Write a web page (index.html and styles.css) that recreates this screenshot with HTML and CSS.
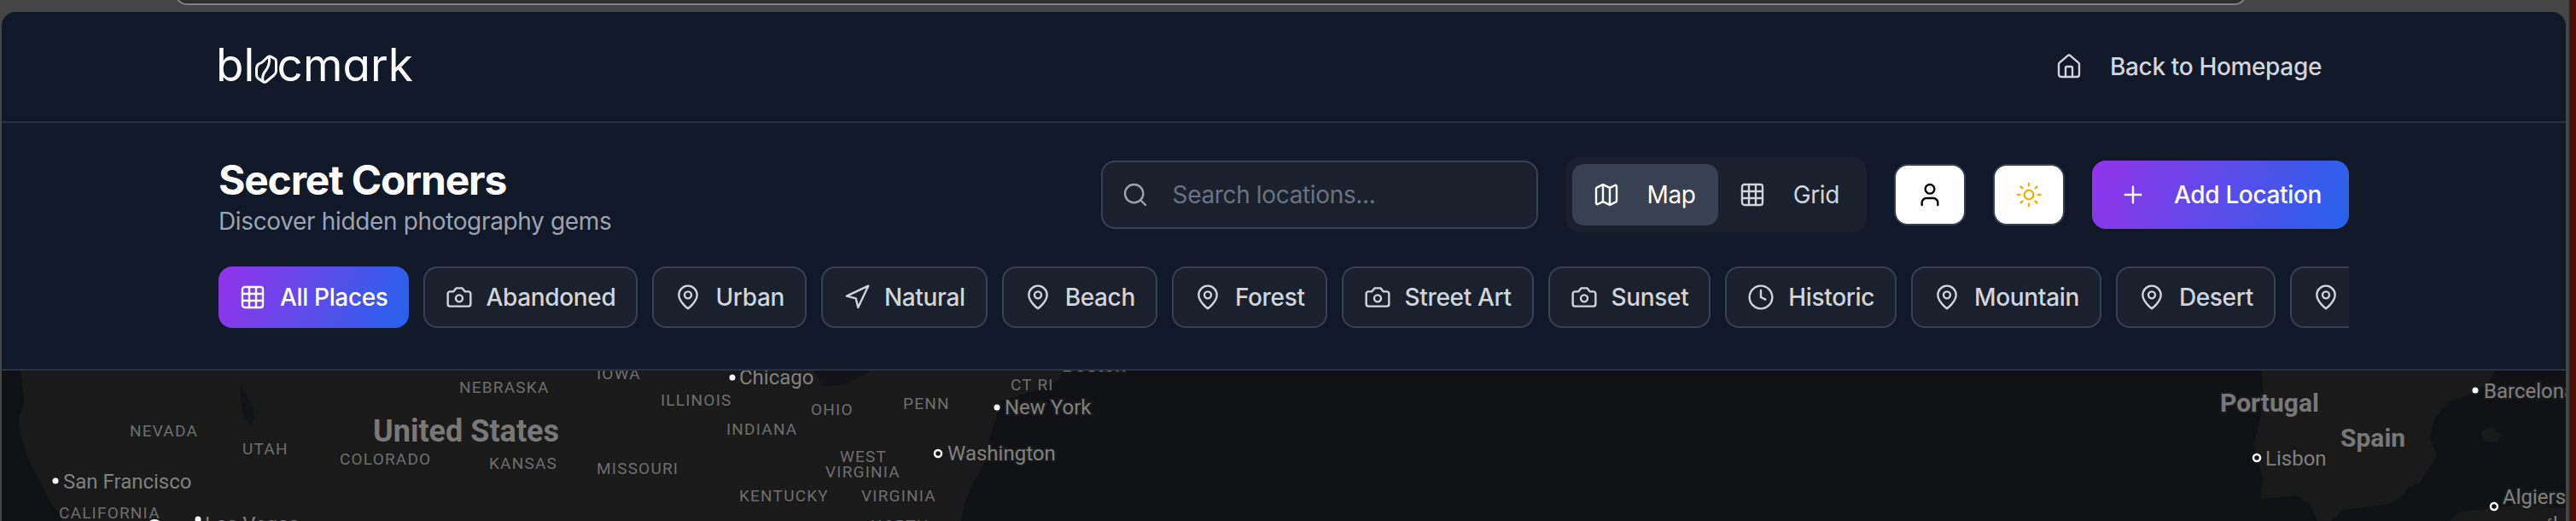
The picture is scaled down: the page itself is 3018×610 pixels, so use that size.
FILE: index.html
```html
<!DOCTYPE html>
<html lang="en">
<head>
    <meta charset="UTF-8">
    <title>Secret Corners</title>
    <link rel="stylesheet" href="styles.css">
</head>
<body>

    <!-- icons used more than once -->
    <svg class="sprite" aria-hidden="true">
        <symbol id="i-pin" viewBox="0 0 24 24"><path d="M20 10c0 6-8 12-8 12s-8-6-8-12a8 8 0 0 1 16 0Z"/><circle cx="12" cy="10" r="3"/></symbol>
        <symbol id="i-camera" viewBox="0 0 24 24"><path d="M14.5 4h-5L7 7H4a2 2 0 0 0-2 2v9a2 2 0 0 0 2 2h16a2 2 0 0 0 2-2V9a2 2 0 0 0-2-2h-3l-2.500-3z"/><circle cx="12" cy="13" r="3"/></symbol>
        <symbol id="i-grid" viewBox="0 0 24 24"><rect x="3" y="3" width="18" height="18" rx="2"/><path d="M3 9h18M3 15h18M9 3v18M15 3v18"/></symbol>
        <symbol id="i-nav" viewBox="0 0 24 24"><polygon points="3 11 22 2 13 21 11 13 3 11"/></symbol>
        <symbol id="i-clock" viewBox="0 0 24 24"><circle cx="12" cy="12" r="10"/><polyline points="12 6 12 12 16 14"/></symbol>
    </svg>

    <div class="browser-bar"></div>

    <div class="window">
        <section class="panel">
            <header class="topbar">
                <a class="logo" href="#">
                    <span>bl</span><svg class="logo-leaf" viewBox="0 0 26 34"><path d="M8 9 15 2.500Q16.500 1.500 18 2.200L22.500 4.500Q24.500 5.500 24.500 8V19Q24.500 22 22 24L13 31.500Q11 33 9 31.500L4.500 28.500Q1.500 26.500 1.500 23.500V17Q1.500 13 4 11Z"/><path d="M16.500 2.500Q17.500 13 11 20.500Q8 24.500 9 31"/></svg><span>cmark</span>
                </a>
                <a class="back-link" href="#">
                    <svg class="icon" viewBox="0 0 24 24"><path d="M15 21v-8a1 1 0 0 0-1-1h-4a1 1 0 0 0-1 1v8"/><path d="M3 10a2 2 0 0 1 .709-1.528l7-5.999a2 2 0 0 1 2.582 0l7 5.999A2 2 0 0 1 21 10v9a2 2 0 0 1-2 2H5a2 2 0 0 1-2-2z"/></svg>
                    Back to Homepage
                </a>
            </header>

            <div class="content">
                <div class="toolbar">
                    <div class="title-block">
                        <h1>Secret Corners</h1>
                        <p>Discover hidden photography gems</p>
                    </div>
                    <div class="actions">
                        <label class="search">
                            <svg class="icon" viewBox="0 0 24 24"><circle cx="11" cy="11" r="8"/><path d="m21 21-4.300-4.300"/></svg>
                            <input type="text" placeholder="Search locations...">
                        </label>
                        <div class="view-toggle">
                            <button class="view-btn active">
                                <svg class="icon" viewBox="0 0 24 24"><path d="M14.106 5.553a2 2 0 0 0 1.788 0l3.659-1.830A1 1 0 0 1 21 4.619v12.764a1 1 0 0 1-.553.894l-4.553 2.277a2 2 0 0 1-1.788 0l-4.212-2.106a2 2 0 0 0-1.788 0l-3.659 1.830A1 1 0 0 1 3 19.381V6.618a1 1 0 0 1 .553-.894l4.553-2.277a2 2 0 0 1 1.788 0z"/><path d="M15 5.764v15"/><path d="M9 3.236v15"/></svg>
                                Map
                            </button>
                            <button class="view-btn">
                                <svg class="icon"><use href="#i-grid"/></svg>
                                Grid
                            </button>
                        </div>
                        <button class="square-btn">
                            <svg class="icon" viewBox="0 0 24 24"><path d="M19 21v-2a4 4 0 0 0-4-4H9a4 4 0 0 0-4 4v2"/><circle cx="12" cy="7" r="4"/></svg>
                        </button>
                        <button class="square-btn sun">
                            <svg class="icon" viewBox="0 0 24 24"><circle cx="12" cy="12" r="4"/><path d="M12 2v2M12 20v2M4.930 4.930l1.410 1.410M17.660 17.660l1.410 1.410M2 12h2M20 12h2M6.340 17.660l-1.410 1.410M19.070 4.930l-1.410 1.410"/></svg>
                        </button>
                        <button class="add-btn">
                            <svg class="icon" viewBox="0 0 24 24"><path d="M5 12h14M12 5v14"/></svg>
                            Add Location
                        </button>
                    </div>
                </div>

                <nav class="filters">
                    <a class="chip active" href="#"><svg class="icon"><use href="#i-grid"/></svg>All Places</a>
                    <a class="chip" href="#"><svg class="icon"><use href="#i-camera"/></svg>Abandoned</a>
                    <a class="chip" href="#"><svg class="icon"><use href="#i-pin"/></svg>Urban</a>
                    <a class="chip" href="#"><svg class="icon"><use href="#i-nav"/></svg>Natural</a>
                    <a class="chip" href="#"><svg class="icon"><use href="#i-pin"/></svg>Beach</a>
                    <a class="chip" href="#"><svg class="icon"><use href="#i-pin"/></svg>Forest</a>
                    <a class="chip" href="#"><svg class="icon"><use href="#i-camera"/></svg>Street Art</a>
                    <a class="chip" href="#"><svg class="icon"><use href="#i-camera"/></svg>Sunset</a>
                    <a class="chip" href="#"><svg class="icon"><use href="#i-clock"/></svg>Historic</a>
                    <a class="chip" href="#"><svg class="icon"><use href="#i-pin"/></svg>Mountain</a>
                    <a class="chip" href="#"><svg class="icon"><use href="#i-pin"/></svg>Desert</a>
                    <a class="chip" href="#"><svg class="icon"><use href="#i-pin"/></svg>Lake</a>
                </nav>
            </div>
        </section>

        <!-- map: viewBox uses page coordinates so labels can be read off directly -->
        <svg class="map" viewBox="2 434 3004 176">
            <rect class="water" x="2" y="434" width="3004" height="176"/>
            <path class="land" d="M24 434 28 470 22 490 24 510 34 540 50 570 60 590 70 600 72 610H1126L1130 590 1140 565 1155 540 1160 510 1168 487 1172 470 1220 455 1240 445 1246 434Z"/>
            <path class="land" d="M2650 434 2652 470 2646 500 2640 520 2651 560 2648 584 2675 582 2690 580 2706 590 2715 610H2731L2745 597 2800 590 2815 580 2822 570 2835 566 2855 533 2847 513 2852 490 2869 470 2900 460 2915 448 2924 434Z"/>
            <path class="land" d="M2870 610 2880 600 2920 595 2960 590 3006 595V610Z"/>
            <path class="land" d="M2906 505 2920 500 2930 510 2925 518 2910 516Z"/>
            <path class="lake" d="M282 450 288 462 296 475 298 488 294 498 286 490 282 470Z"/>
            <path class="lake" d="M953 434 1020 434 990 450 965 452Z"/>

            <text class="state" x="538" y="460">NEBRASKA</text>
            <text class="state" x="699" y="444">IOWA</text>
            <text class="state" x="774" y="475">ILLINOIS</text>
            <text class="state" x="152" y="511">NEVADA</text>
            <text class="state" x="284" y="532">UTAH</text>
            <text class="state" x="398" y="544">COLORADO</text>
            <text class="state" x="573" y="549">KANSAS</text>
            <text class="state" x="699" y="555">MISSOURI</text>
            <text class="state" x="69" y="607">CALIFORNIA</text>
            <text class="state" x="950" y="486">OHIO</text>
            <text class="state" x="1058" y="479">PENN</text>
            <text class="state" x="851" y="509">INDIANA</text>
            <text class="state" x="1184" y="457">CT RI</text>
            <text class="state" x="984" y="541">WEST</text>
            <text class="state" x="967" y="559">VIRGINIA</text>
            <text class="state" x="866" y="587">KENTUCKY</text>
            <text class="state" x="1009" y="587">VIRGINIA</text>
            <text class="state" x="1020" y="622">NORTH</text>

            <text class="country" x="437" y="517">United States</text>
            <text class="country small" x="2601" y="482">Portugal</text>
            <text class="country small" x="2742" y="523">Spain</text>

            <text class="city" x="74" y="572">San Francisco</text>
            <text class="city" x="240" y="622">Las Vegas</text>
            <text class="city" x="866" y="450">Chicago</text>
            <text class="city" x="1244" y="435">Boston</text>
            <text class="city" x="1177" y="485">New York</text>
            <text class="city" x="1110" y="539">Washington</text>
            <text class="city" x="2654" y="545">Lisbon</text>
            <text class="city" x="2910" y="466">Barcelona</text>
            <text class="city" x="2932" y="590">Algiers</text>
            <text class="city arabic" x="3040" y="622">الجزائر</text>

            <circle class="dot" cx="65" cy="563" r="4.500"/>
            <circle class="dot" cx="232" cy="608" r="4.500"/>
            <circle class="dot" cx="181" cy="618" r="11"/>
            <circle class="dot" cx="858" cy="442" r="4.500"/>
            <circle class="dot" cx="1168" cy="477" r="4.500"/>
            <circle class="dot" cx="2900" cy="457" r="4.500"/>
            <circle class="ring" cx="1099" cy="531" r="4"/>
            <circle class="ring" cx="2644" cy="536" r="4"/>
            <circle class="ring" cx="2922" cy="593" r="4"/>
        </svg>
    </div>

</body>
</html>
```

FILE: styles.css
```css
* {
    box-sizing: border-box;
}

html, body {
    height: 610px;
    margin: 0;
    overflow: hidden;
}

body {
    position: relative;
    background-color: #454545;
    font-family: Inter, "Liberation Sans", sans-serif;
    font-size: 28px;
    letter-spacing: -0.35px;
}

/* edge of the next window, lies over the backdrop */
body::after {
    content: "";
    position: absolute;
    top: 0;
    right: 0;
    bottom: 0;
    width: 6px;
    background-color: #4d1005;
    border-left: 2px solid #242424;
}

a {
    color: inherit;
    text-decoration: none;
}

.sprite {
    display: none;
}

.icon {
    width: 32px;
    height: 32px;
    flex-shrink: 0;
    fill: none;
    stroke: currentColor;
    stroke-width: 1.800;
    stroke-linecap: round;
    stroke-linejoin: round;
}

.browser-bar {
    height: 20px;
    margin: -14px 386px 8px 205px;
    background-color: #2e2e2e;
    border: 2px solid #808080;
    border-radius: 0 0 14px 14px;
}

.window {
    width: 3004px;
    margin-left: 2px;
    border-radius: 16px 16px 0 0;
    overflow: hidden;
}

/* top panel */
.panel {
    background-color: #111827;
    border-bottom: 2px solid #283042;
}

.topbar {
    display: flex;
    align-items: center;
    justify-content: space-between;
    height: 130px;
    padding: 0 286px 1px 251px;
    border-bottom: 2px solid #283042;
}

.logo {
    display: flex;
    align-items: center;
    margin-bottom: 3px;
    font-size: 53px;
    font-weight: 400;
    line-height: 1;
    color: #ffffff;
    font-feature-settings: "cv11";
    letter-spacing: 0.1px;
}

.logo-leaf {
    width: 26px;
    height: 34px;
    margin-top: 9px;
    fill: none;
    stroke: #ffffff;
    stroke-width: 3;
    stroke-linejoin: round;
}

.back-link {
    display: flex;
    align-items: center;
    gap: 32px;
    font-weight: 500;
    color: #d1d5db;
}

.content {
    padding: 40px 254px 48px;
}

.toolbar {
    display: flex;
    align-items: center;
    justify-content: space-between;
}

.title-block h1 {
    margin: 0 0 8px;
    font-size: 48px;
    line-height: 54px;
    font-weight: 700;
    letter-spacing: -1.2px;
    color: #ffffff;
}

.title-block p {
    margin: 0;
    line-height: 26px;
    color: #9ca3af;
}

.actions {
    display: flex;
    align-items: center;
    gap: 32px;
}

.search {
    display: flex;
    align-items: center;
    width: 512px;
    height: 80px;
    padding-left: 22px;
    background-color: #1a202c;
    border: 2px solid #374151;
    border-radius: 16px;
    color: #9ca3af;
}

.search input {
    flex: 1;
    min-width: 0;
    margin-left: 26px;
    background: none;
    border: none;
    outline: none;
    font: inherit;
    letter-spacing: inherit;
    color: #ffffff;
}

.search input::placeholder {
    color: #6b7280;
}

.view-toggle {
    display: flex;
    padding: 8px;
    background-color: #1a202c;
    border-radius: 16px;
}

.view-btn {
    display: flex;
    align-items: center;
    gap: 32px;
    height: 72px;
    padding: 0 24px;
    background: none;
    border: none;
    border-radius: 14px;
    font: inherit;
    letter-spacing: inherit;
    color: #d1d5db;
}

.view-btn.active {
    padding-right: 26px;
    background-color: #374151;
    color: #ffffff;
}

.square-btn {
    display: flex;
    align-items: center;
    justify-content: center;
    width: 84px;
    height: 72px;
    padding: 0;
    background-color: #ffffff;
    border: 2px solid #374151;
    border-radius: 16px;
    color: #000000;
}

.square-btn.sun {
    color: #eab308;
}

.add-btn {
    display: flex;
    align-items: center;
    gap: 32px;
    height: 80px;
    padding: 0 32px;
    background: linear-gradient(110deg, #9333ea, #2563eb);
    border: none;
    border-radius: 16px;
    font: inherit;
    font-weight: 500;
    letter-spacing: inherit;
    color: #ffffff;
}

/* category chips */
.filters {
    display: flex;
    gap: 17px;
    margin-top: 40px;
    overflow: hidden;
}

.chip {
    display: flex;
    align-items: center;
    flex-shrink: 0;
    gap: 16px;
    height: 72px;
    padding: 0 24px;
    background-color: #1a202c;
    border: 2px solid #374151;
    border-radius: 16px;
    font-weight: 500;
    color: #d1d5db;
}

.chip.active {
    background: linear-gradient(110deg, #9333ea, #2563eb);
    border: none;
    color: #ffffff;
}

/* map */
.map {
    display: block;
    width: 3004px;
    height: 176px;
    font-family: Roboto, "Liberation Sans", sans-serif;
    letter-spacing: 0;
}

.water {
    fill: #0f1115;
}

.land {
    fill: #1a1a1a;
}

.lake {
    fill: #111318;
}

.state {
    font-size: 19px;
    letter-spacing: 1.2px;
    fill: #6e6e6e;
}

.country {
    font-size: 36px;
    font-weight: 700;
    fill: #787878;
    paint-order: stroke;
    stroke: #1a1a1a;
    stroke-width: 4px;
}

.country.small {
    font-size: 30px;
}

.city {
    font-size: 24px;
    fill: #808080;
    paint-order: stroke;
    stroke: #1a1a1a;
    stroke-width: 4px;
}

.arabic {
    font-family: "DejaVu Sans", sans-serif;
    text-anchor: end;
}

.dot {
    fill: #ffffff;
    stroke: #1a1a1a;
    stroke-width: 2px;
}

.ring {
    fill: #111111;
    stroke: #ffffff;
    stroke-width: 2.500px;
}
```
